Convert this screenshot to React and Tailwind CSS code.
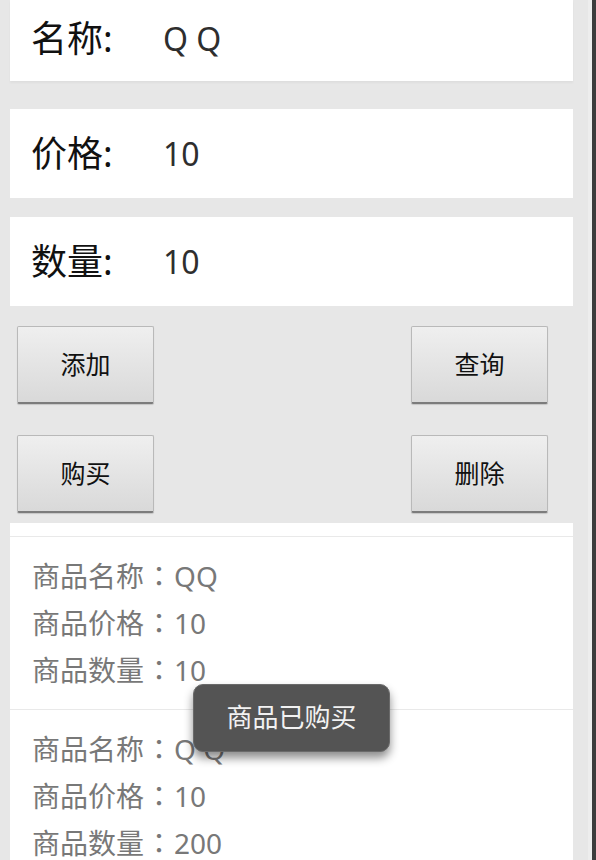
import React from "react";

const font = { fontFamily: '"Noto Sans", "Noto Sans CJK SC", sans-serif' };

function Field({ label, value, className }) {
  return (
    <div className={"bg-white flex items-center w-[563px] shrink-0 " + className}>
      <div className="pl-[21px] w-[153px] shrink-0 text-[36px] leading-none text-[#111]">{label}</div>
      <div className="text-[32px] leading-none text-[#2e2e2e]">{value}</div>
    </div>
  );
}

function Btn({ children }) {
  return (
    <div className="w-[137px] h-[78px] rounded-[2px] border border-[#b9b9b9] border-b-[2px] border-b-[#7c7c7c] bg-gradient-to-b from-[#efefef] to-[#d9d9d9] flex items-center justify-center text-[25px] text-[#111] shadow-[0_1px_1px_rgba(0,0,0,0.15)]">
      {children}
    </div>
  );
}

function Colon() {
  return <span className="inline-block w-[30px] text-center" style={{ fontFamily: '"Noto Sans CJK JP", sans-serif' }}>：</span>;
}

function Item({ name, price, qty }) {
  return (
    <div className="border-t border-[#e9e9e9] pt-[15px] pb-[16px] pl-[22px] text-[28px] leading-[46px] text-[#787878]">
      <div>商品名称<Colon />{name}</div>
      <div>商品价格<Colon />{price}</div>
      <div>商品数量<Colon />{qty}</div>
    </div>
  );
}

export default function App() {
  return (
    <div className="w-[596px] h-[860px] overflow-hidden bg-[#e7e7e7] flex relative" style={font}>
      <div className="w-[588px] shrink-0 pl-[10px] flex flex-col">
        <Field label="名称:" value="Q Q" className="h-[81px] pb-[3px] shadow-[0_2px_2px_rgba(0,0,0,0.04)]" />
        <Field label="价格:" value="10" className="h-[89px] mt-[28px]" />
        <Field label="数量:" value="10" className="h-[89px] mt-[19px]" />
        <div className="w-[563px] shrink-0 flex justify-between pl-[7px] pr-[25px] mt-[20px]">
          <Btn>添加</Btn>
          <Btn>查询</Btn>
        </div>
        <div className="w-[563px] shrink-0 flex justify-between pl-[7px] pr-[25px] mt-[31px]">
          <Btn>购买</Btn>
          <Btn>删除</Btn>
        </div>
        <div className="w-[563px] shrink-0 bg-white mt-[10px] pt-[13px] flex-1">
          <Item name="QQ" price="10" qty="10" />
          <Item name="Q Q" price="10" qty="200" />
        </div>
      </div>
      <div className="w-[4px] bg-[#ededed]" />
      <div className="w-[4px] bg-[#3c3c3c]" />
      <div className="absolute left-[193px] top-[684px] w-[197px] h-[68px] rounded-[10px] bg-[#545454] border border-[#6a6a6a] shadow-[0_6px_10px_rgba(0,0,0,0.45)] flex items-center justify-center pb-[2px] text-[26px] text-[#f2f2f2]">
        商品已购买
      </div>
    </div>
  );
}
